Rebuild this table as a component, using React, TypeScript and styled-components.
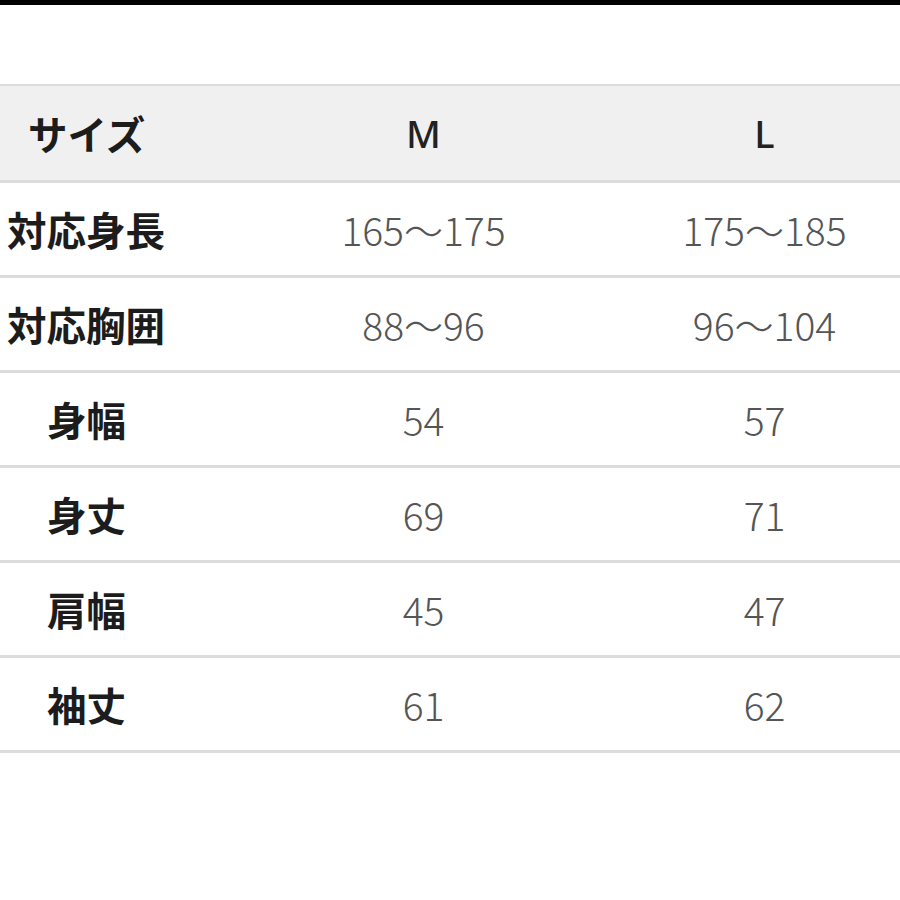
import React from "react";
import styled, { createGlobalStyle } from "styled-components";

const GlobalStyle = createGlobalStyle`
  html, body {
    margin: 0;
    padding: 0;
    background: #ffffff;
    overflow: hidden;
  }
  body {
    font-family: "Noto Sans CJK JP", "Noto Sans", sans-serif;
  }
`;

const Page = styled.div`
  width: 900px;
  height: 900px;
  overflow: hidden;
  background: #ffffff;
`;

const TopBar = styled.div`
  height: 5px;
  background: #000000;
`;

const TableWrap = styled.div`
  margin-top: 79px;
  width: 935px;
  border-top: 2px solid #dcdcdc;
`;

const Row = styled.div<{ $head?: boolean }>`
  display: grid;
  grid-template-columns: 253px 341px 341px;
  align-items: center;
  box-sizing: border-box;
  height: ${(p) => (p.$head ? "97px" : "95px")};
  background: ${(p) => (p.$head ? "#f0f0f0" : "#ffffff")};
  border-bottom: 3px solid #dcdcdc;
`;

const Label = styled.div<{ $indent: number }>`
  padding-left: ${(p) => p.$indent}px;
  font-size: 39.5px;
  font-weight: 700;
  color: #1c1c1c;
  line-height: 1;
  white-space: nowrap;
`;

const SizeHead = styled.div`
  text-align: center;
  font-family: "Noto Sans", "Noto Sans CJK JP", sans-serif;
  font-size: 38px;
  font-weight: 500;
  color: #222222;
  line-height: 1;
`;

const Value = styled.div`
  text-align: center;
  font-size: 39px;
  font-weight: 300;
  color: #555555;
  line-height: 1;
  white-space: nowrap;
`;

const rows: { label: string; indent: number; m: string; l: string }[] = [
  { label: "対応身長", indent: 7, m: "165〜175", l: "175〜185" },
  { label: "対応胸囲", indent: 7, m: "88〜96", l: "96〜104" },
  { label: "身幅", indent: 47, m: "54", l: "57" },
  { label: "身丈", indent: 47, m: "69", l: "71" },
  { label: "肩幅", indent: 47, m: "45", l: "47" },
  { label: "袖丈", indent: 47, m: "61", l: "62" },
];

export default function App() {
  return (
    <Page>
      <GlobalStyle />
      <TopBar />
      <TableWrap>
        <Row $head>
          <Label $indent={28}>サイズ</Label>
          <SizeHead>M</SizeHead>
          <SizeHead>L</SizeHead>
        </Row>
        {rows.map((r) => (
          <Row key={r.label}>
            <Label $indent={r.indent}>{r.label}</Label>
            <Value>{r.m}</Value>
            <Value>{r.l}</Value>
          </Row>
        ))}
      </TableWrap>
    </Page>
  );
}
